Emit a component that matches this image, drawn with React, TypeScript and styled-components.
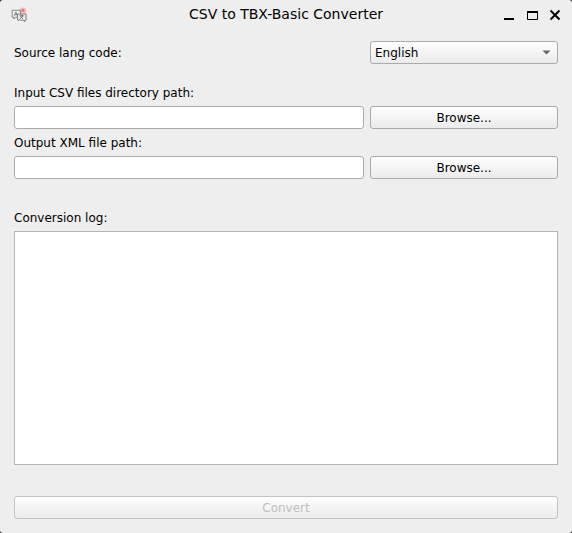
import React from "react";
import styled, { createGlobalStyle, css } from "styled-components";

const GlobalStyle = createGlobalStyle`
  * { box-sizing: border-box; }
  body { margin: 0; background: #202020; overflow: hidden; }
  button, input, textarea { font: inherit; }
`;

const Window = styled.main`
  display: flex;
  flex-direction: column;
  width: 572px;
  height: 533px;
  border-radius: 3px;
  background: #eeeeee;
  color: #000;
  font: 12px/14px "DejaVu Sans", sans-serif;
`;

const TitleBar = styled.header`
  display: grid;
  grid-template-columns: 72px 1fr 72px;
  align-items: center;
  height: 30px;
  flex: none;
`;

const AppIcon = styled.svg`
  display: block;
  width: 16px;
  height: 16px;
  margin-left: 11px;
`;

const Title = styled.h1`
  margin: 0;
  padding-bottom: 2px;
  font-size: 14px;
  font-weight: 400;
  line-height: 18px;
  text-align: center;
`;

const WindowControls = styled.svg`
  display: block;
  width: 72px;
  height: 30px;
`;

const Content = styled.div`
  display: flex;
  flex-direction: column;
  padding: 11px 14px 14px;
  flex: 1;
`;

const Row = styled.div<{ $after: number }>`
  display: grid;
  grid-template-columns: 350px 188px;
  column-gap: 6px;
  align-items: center;
  height: 23px;
  flex: none;
  margin-bottom: ${(p) => p.$after}px;
`;

const Label = styled.label<{ $after?: number }>`
  display: block;
  height: 14px;
  flex: none;
  margin-bottom: ${(p) => p.$after ?? 0}px;
`;

const raised = css`
  height: 23px;
  border: 1px solid #ababab;
  border-radius: 3px;
  background: linear-gradient(#fefefe, #ebebeb);
`;

const Button = styled.button`
  ${raised}
  width: 100%;
  padding: 2px 0 0;
  color: #000;
  line-height: 19px;
  text-align: center;
  &:disabled {
    border-color: #c2c2c2;
    color: #bebebe;
  }
`;

const Select = styled.div`
  ${raised}
  display: flex;
  align-items: center;
  justify-content: space-between;
  padding: 0 6px 0 4px;
`;

const Arrow = styled.svg`
  width: 9px;
  height: 5px;
`;

const PathInput = styled.input`
  height: 23px;
  width: 100%;
  padding: 0 4px;
  border: 1px solid #ababab;
  border-radius: 3px;
  background: #fff;
`;

const Log = styled.textarea`
  display: block;
  width: 100%;
  height: 234px;
  margin: 0 0 31px;
  border: 1px solid #b5b5b5;
  border-radius: 0;
  background: #fff;
  resize: none;
`;

function TranslationIcon() {
  return (
    <AppIcon viewBox="0 0 16 16" fill="none">
      <circle cx="11.9" cy="3.8" r="3.3" fill="#f7bcbc" />
      <path d="M10.4 2.6h2.4v2.3M10.3 5l2.4-2.4" stroke="#a86464" strokeWidth=".7" />
      <path d="M6.5 10.2H4.6L2.9 12v-1.8H1.1V3.3h8.3v3.6" stroke="#707070" strokeWidth=".8" />
      <path d="m3.4 8.9 1.5-4 1.5 4M4 7.5h2" stroke="#707070" strokeWidth=".8" />
      <path d="M6.5 7.1h8.6v6h-1.3v1.8l-1.8-1.8H6.5z" fill="#eee" stroke="#666" strokeWidth=".8" />
      <path d="M8.7 8.8h4M10.7 8.1v.7m-2 3.2 3.2-3.1M9.5 9.3l2.8 2.7" stroke="#555" strokeWidth=".8" />
    </AppIcon>
  );
}

export default function App() {
  return (
    <>
      <GlobalStyle />
      <Window>
        <TitleBar>
          <TranslationIcon />
          <Title>CSV to TBX-Basic Converter</Title>
          <WindowControls viewBox="0 0 72 30">
            <path d="M4 18h10v2H4z" fill="#000" />
            <path d="M27.5 12v7.5h10V12" fill="none" stroke="#000" />
            <path d="M27 11h11v2H27z" fill="#000" />
            <path d="m50.5 10.5 9 9m0-9-9 9" stroke="#000" strokeWidth="2" />
          </WindowControls>
        </TitleBar>
        <Content>
          <Row $after={22}>
            <Label>Source lang code:</Label>
            <Select role="combobox" aria-expanded={false} tabIndex={0}>
              <span>English</span>
              <Arrow viewBox="0 0 9 5">
                <path d="M.5 .5h8L4.5 4.5z" fill="#666" />
              </Arrow>
            </Select>
          </Row>
          <Label htmlFor="input-path" $after={6}>Input CSV files directory path:</Label>
          <Row $after={7}>
            <PathInput id="input-path" />
            <Button>Browse...</Button>
          </Row>
          <Label htmlFor="output-path" $after={6}>Output XML file path:</Label>
          <Row $after={32}>
            <PathInput id="output-path" />
            <Button>Browse...</Button>
          </Row>
          <Label htmlFor="log" $after={6}>Conversion log:</Label>
          <Log id="log" readOnly />
          <Button disabled>Convert</Button>
        </Content>
      </Window>
    </>
  );
}
